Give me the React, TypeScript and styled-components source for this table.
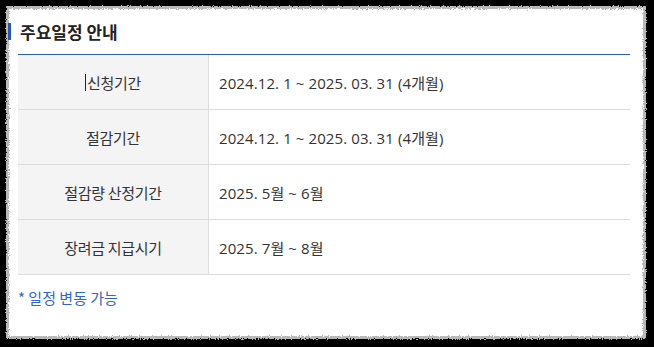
import React from 'react';
import styled, { createGlobalStyle } from 'styled-components';

const GlobalStyle = createGlobalStyle`
  html, body {
    margin: 0;
    padding: 0;
    background: #000;
  }
  body {
    width: 654px;
    height: 347px;
    overflow: hidden;
    font-family: "Noto Sans CJK KR", "Noto Sans", sans-serif;
  }
`;

const Paper = styled.div`
  position: relative;
  margin: 8px 0 0 8px;
  width: 636px;
  height: 329px;
  box-sizing: border-box;
  padding: 15px 14px 0 0;
`;

// white sheet behind the content, with a rough grey rim
const PaperSheet = styled.div`
  position: absolute;
  inset: -2px;
  background: #fff;
  border: 3px solid #b8b8b8;
  filter: url(#rough-edge);
  z-index: 0;
`;

const Content = styled.div`
  position: relative;
  z-index: 1;
`;

const Heading = styled.h2`
  margin: 0 0 14px;
  padding-left: 9px;
  border-left: 3px solid #2457a8;
  height: 17px;
  line-height: 17px;
  font-size: 17px;
  font-weight: 700;
  color: #222;
`;

const Body = styled.div`
  padding-left: 10px;
`;

const Table = styled.div`
  border-top: 1px solid #2e5cae;
`;

const Row = styled.div`
  display: grid;
  grid-template-columns: 191px 1fr;
  height: 55px;
  box-sizing: border-box;
  border-bottom: 1px solid #dcdcdc;
`;

const Label = styled.div`
  display: flex;
  align-items: center;
  justify-content: center;
  background: #f4f4f4;
  border-right: 1px solid #dcdcdc;
  font-size: 15px;
  letter-spacing: -0.3px;
  color: #333;
`;

const Value = styled.div`
  display: flex;
  align-items: center;
  padding-left: 10px;
  font-family: "Open Sans", "Noto Sans CJK KR", sans-serif;
  font-size: 15px;
  letter-spacing: 0.1px;
  color: #333;
`;

const Caret = styled.span`
  display: inline-block;
  width: 1px;
  height: 17px;
  background: #222;
  margin-right: 1px;
`;

const Note = styled.p`
  margin: 12px 0 0;
  font-size: 15px;
  line-height: 21px;
  color: #2f66c9;
`;

const schedule = [
  { label: '신청기간', value: '2024.12. 1 ~ 2025. 03. 31 (4개월)', caret: true },
  { label: '절감기간', value: '2024.12. 1 ~ 2025. 03. 31 (4개월)' },
  { label: '절감량 산정기간', value: '2025. 5월 ~ 6월' },
  { label: '장려금 지급시기', value: '2025. 7월 ~ 8월' },
];

export default function App() {
  return (
    <>
      <GlobalStyle />
      <svg width="0" height="0" style={{ position: 'absolute' }}>
        <filter id="rough-edge">
          <feTurbulence type="fractalNoise" baseFrequency="0.9" numOctaves="2" seed="3" />
          <feDisplacementMap in="SourceGraphic" scale="4" xChannelSelector="R" yChannelSelector="G" />
        </filter>
      </svg>
      <Paper>
        <PaperSheet />
        <Content>
          <Heading>주요일정 안내</Heading>
          <Body>
            <Table>
              {schedule.map((row) => (
                <Row key={row.label}>
                  <Label>
                    {row.caret && <Caret />}
                    {row.label}
                  </Label>
                  <Value>{row.value}</Value>
                </Row>
              ))}
            </Table>
            <Note>* 일정 변동 가능</Note>
          </Body>
        </Content>
      </Paper>
    </>
  );
}
